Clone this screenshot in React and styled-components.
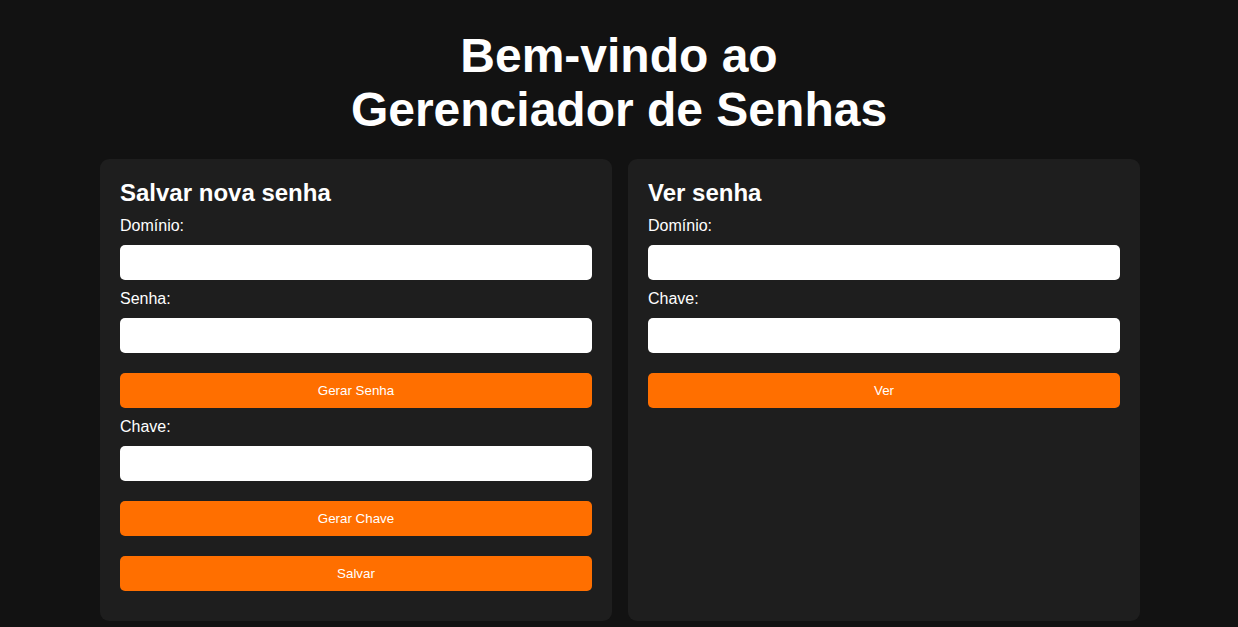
import React from 'react';
import styled, { createGlobalStyle } from 'styled-components';

const GlobalStyle = createGlobalStyle`
  body {
    margin: 0;
    background: #121212;
    color: #fff;
    font-family: 'Liberation Sans', Arial, sans-serif;
  }
`

const Page = styled.div`
  display: flex;
  flex-direction: column;
  align-items: center;
  padding-top: 29px;
`

const Title = styled.h1`
  margin: 0 0 22px;
  font-size: 48px;
  font-weight: 700;
  line-height: 54px;
  text-align: center;
`

const Columns = styled.div`
  display: flex;
  gap: 16px;
  width: 1040px;
  margin-left: 2px;
`

const Card = styled.section`
  flex: 1;
  display: flex;
  flex-direction: column;
  background: #1e1e1e;
  border-radius: 9px;
  padding: 20px;
`

const CardTitle = styled.h2`
  margin: 0 0 10px;
  font-size: 24px;
  font-weight: 700;
  line-height: 28px;
`

const Label = styled.label`
  font-size: 16px;
  line-height: 18px;
  margin-top: ${p => (p.$first ? '0' : '10px')};
`

const Input = styled.input`
  height: 35px;
  margin-top: 10px;
  border: none;
  border-radius: 5px;
  background: #fff;
  padding: 0 10px;
  font-family: inherit;
  font-size: 14px;
  outline: none;
`

const Button = styled.button`
  height: 35px;
  margin-top: 20px;
  margin-bottom: ${p => (p.$last ? '10px' : '0')};
  border: none;
  border-radius: 5px;
  background: #ff6f00;
  color: #fff;
  font-family: inherit;
  font-size: 13.333px;
  cursor: pointer;
`

const App = () => {
  return (
    <Page>
      <GlobalStyle />
      <Title>
        Bem-vindo ao
        <br />
        Gerenciador de Senhas
      </Title>
      <Columns>
        <Card>
          <CardTitle>Salvar nova senha</CardTitle>
          <Label $first>Domínio:</Label>
          <Input type="text" />
          <Label>Senha:</Label>
          <Input type="text" />
          <Button>Gerar Senha</Button>
          <Label>Chave:</Label>
          <Input type="text" />
          <Button>Gerar Chave</Button>
          <Button $last>Salvar</Button>
        </Card>
        <Card>
          <CardTitle>Ver senha</CardTitle>
          <Label $first>Domínio:</Label>
          <Input type="text" />
          <Label>Chave:</Label>
          <Input type="text" />
          <Button>Ver</Button>
        </Card>
      </Columns>
    </Page>
  )
}

export default App
